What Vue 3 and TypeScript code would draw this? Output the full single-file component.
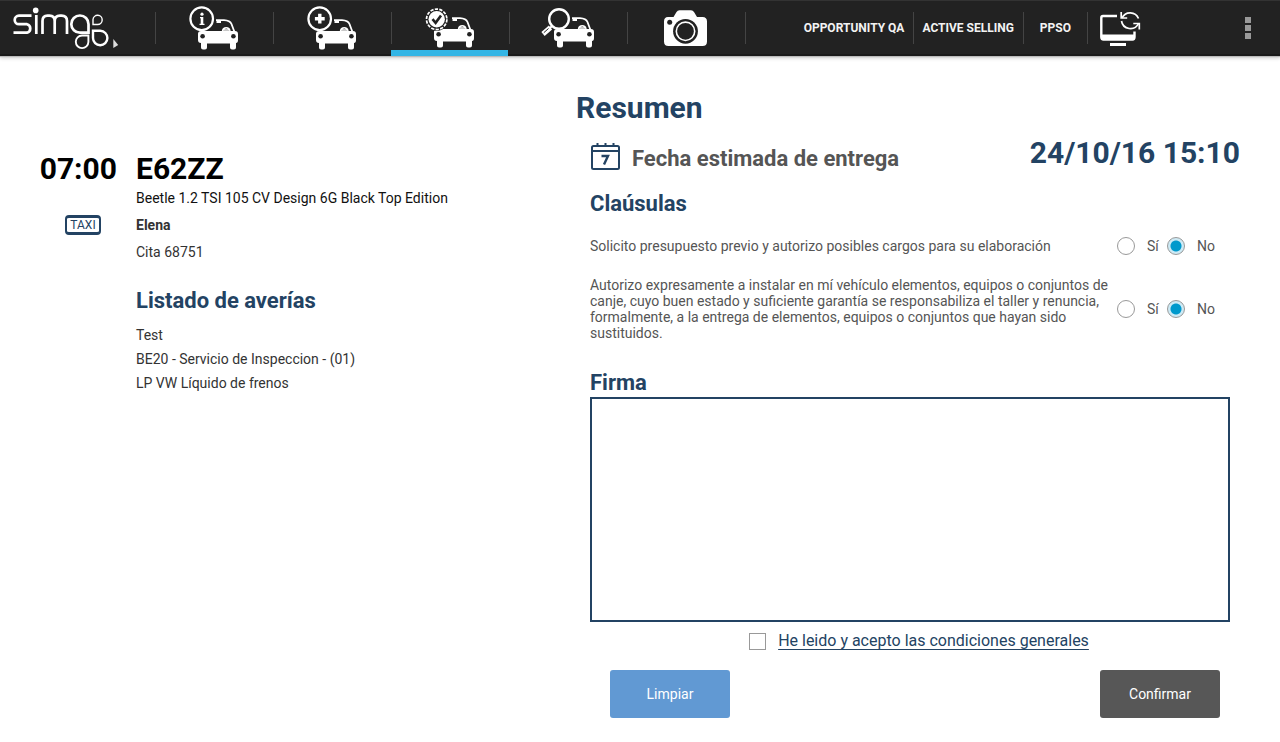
<script setup lang="ts">
import { onMounted, reactive, ref } from 'vue'

interface Tab { id: string; label: string }
interface Clause { id: string; text: string; answer: 'si' | 'no' }

const tabs: Tab[] = [
  { id: 'info', label: 'Información' },
  { id: 'add', label: 'Añadir' },
  { id: 'check', label: 'Resumen' },
  { id: 'search', label: 'Inspección' },
  { id: 'camera', label: 'Fotos' },
]
const active = ref('check')
const links = ['OPPORTUNITY QA', 'ACTIVE SELLING', 'PPSO']
const faults = ['Test', 'BE20 - Servicio de Inspeccion - (01)', 'LP VW Líquido de frenos']
const clauses = reactive<Clause[]>([
  { id: 'presupuesto', text: 'Solicito presupuesto previo y autorizo posibles cargos para su elaboración', answer: 'no' },
  {
    id: 'canje',
    text: 'Autorizo expresamente a instalar en mí vehículo elementos, equipos o conjuntos de canje, cuyo buen estado y suficiente garantía se responsabiliza el taller y renuncia, formalmente, a la entrega de elementos, equipos o conjuntos que hayan sido sustituidos.',
    answer: 'no',
  },
])
const accepted = ref(false)

const pad = ref<HTMLCanvasElement | null>(null)
let drawing = false

onMounted(() => {
  const c = pad.value
  if (c) {
    c.width = c.clientWidth
    c.height = c.clientHeight
  }
})

function start(e: PointerEvent) {
  const ctx = pad.value?.getContext('2d')
  if (!ctx) return
  drawing = true
  ctx.lineWidth = 2
  ctx.strokeStyle = '#234363'
  ctx.beginPath()
  ctx.moveTo(e.offsetX, e.offsetY)
}
function move(e: PointerEvent) {
  const ctx = pad.value?.getContext('2d')
  if (!drawing || !ctx) return
  ctx.lineTo(e.offsetX, e.offsetY)
  ctx.stroke()
}
function stop() {
  drawing = false
}
function clearPad() {
  const c = pad.value
  c?.getContext('2d')?.clearRect(0, 0, c.width, c.height)
}
</script>

<template>
  <div class="page">
    <svg class="defs" aria-hidden="true">
      <defs>
        <g id="car">
          <path d="M3 31H37Q40 31 40 34V40Q40 43 38 43V47.5Q38 49.5 36 49.5H34Q32 49.5 32 47.5V43.5H9V47.5Q9 49.5 7 49.5H5Q3 49.5 3 47.5V43Q0 43 0 40V34Q0 31 3 31Z" fill="#fff" />
          <circle cx="4.6" cy="36.3" r="2.3" fill="#222" />
          <circle cx="35.4" cy="36.3" r="2.3" fill="#222" />
          <path d="M18 20.2H26Q32 20.6 33.5 24L36.3 31.5" fill="none" stroke="#fff" stroke-width="1.8" />
          <path d="M18.5 20H23V23H18.5Z" fill="#fff" />
          <path d="M24.5 31A3.8 3.8 0 0 1 32 31M25 30H31.5" fill="none" stroke="#fff" stroke-width="1.4" />
        </g>
      </defs>
    </svg>

    <header class="bar">
      <a class="logo" href="#" aria-label="simo">
        <svg viewBox="0 0 155 56" width="155" height="56" fill="none" stroke="#fff" stroke-width="2.7">
          <path d="M31.5 15.6H19A4.3 4.3 0 0 0 19 24.2H27A4.4 4.4 0 0 1 27 32.7H13.5" />
          <path d="M36.3 15V34" />
          <circle cx="35.7" cy="10.4" r="2.8" fill="#fff" stroke="none" />
          <path d="M42.5 34V21Q42.5 15.6 47.5 15.6H49.5Q54.7 15.6 54.7 21V34M54.7 21Q54.7 15.6 60 15.6H61.5Q67 15.6 67 21V34" />
          <path d="M88.5 32.7H80A8.6 8.6 0 1 1 88.5 24.2Z" />
          <path d="M93 24.5V19.5A4.6 4.6 0 1 1 97.6 24.5Z" stroke-width="1.4" />
          <path d="M93 30.8H100.3A7.2 7.2 0 1 1 93 38Z" stroke-width="2.4" />
          <path d="M88.4 35.5V42A6.3 6.3 0 1 1 82 35.5Z" stroke-width="1.9" />
          <path d="M113.3 39L118.2 45L113.3 48Z" fill="#ddd" stroke="none" />
        </svg>
      </a>
      <nav class="tabs" aria-label="Secciones">
        <button
          v-for="t in tabs" :key="t.id" type="button" class="tab"
          :class="{ active: active === t.id }" :aria-label="t.label" @click="active = t.id"
        >
          <svg viewBox="0 0 118 56" width="118" height="56" fill="none">
            <template v-if="t.id === 'info'">
              <use href="#car" x="43" />
              <circle cx="46.7" cy="18.7" r="11.3" fill="#222" stroke="#fff" stroke-width="2.2" />
              <path d="M45 17.6H47M44.5 24.3H49.5" stroke="#fff" stroke-width="1.3" />
              <path d="M47 17V24.9" stroke="#fff" stroke-width="2.6" />
              <circle cx="47" cy="14.2" r="1.6" fill="#fff" />
            </template>
            <template v-else-if="t.id === 'add'">
              <use href="#car" x="43" />
              <circle cx="46.7" cy="18.7" r="11.3" fill="#222" stroke="#fff" stroke-width="2.2" />
              <path d="M46.8 13.8V23.6M41.9 18.7H51.7" stroke="#fff" stroke-width="3.4" />
            </template>
            <template v-else-if="t.id === 'check'">
              <use href="#car" x="43" y="-2" />
              <circle cx="45.7" cy="19.3" r="11.5" fill="#222" />
              <circle cx="45.7" cy="19.3" r="10.2" stroke="#fff" stroke-width="1.7" stroke-dasharray="3.3 1.28" />
              <circle cx="45.7" cy="19.3" r="8.2" fill="#fff" />
              <path d="M41.5 19.2L44.6 22.8L50 15.4" stroke="#222" stroke-width="2.6" />
            </template>
            <template v-else-if="t.id === 'search'">
              <use href="#car" x="45" y="-2" />
              <circle cx="50" cy="19" r="9.8" fill="#222" stroke="#fff" stroke-width="2.4" />
              <path d="M43.5 25.5L40.5 28.5" stroke="#fff" stroke-width="2" />
              <path d="M41.5 27.5L34 34" stroke="#fff" stroke-width="5" />
              <path d="M39.5 28.5L34.8 32.7" stroke="#222" stroke-width="1" />
            </template>
            <template v-else>
              <path d="M41 17H46.5L49.5 12Q50.5 10.2 52.5 10.2H64Q66 10.2 67 12L70 17H75.5Q80 17 80 21.5V41.5Q80 46 75.5 46H41.5Q37 46 37 41.5V21.5Q37 17 41 17Z" fill="#fff" />
              <circle cx="58.5" cy="31.3" r="12.4" fill="#222" />
              <circle cx="58.5" cy="31.3" r="9.2" stroke="#fff" stroke-width="1.6" />
              <circle cx="42.7" cy="22.2" r="2.5" fill="#222" />
            </template>
          </svg>
        </button>
      </nav>
      <nav class="links" aria-label="Accesos">
        <a v-for="l in links" :key="l" href="#">{{ l }}</a>
        <button type="button" class="sync" aria-label="Sincronizar">
          <svg viewBox="0 0 42 38" width="42" height="38" fill="none">
            <path d="M18 7H4Q2.3 7 2.3 9V28Q2.3 30.5 4.5 30.5H33.5Q35.5 30.5 35.5 28V22.5" stroke="#fff" stroke-width="2.4" />
            <path d="M2.5 25.5H35.5V29Q35.5 31 33.5 31H4.5Q2.5 31 2.5 29Z" fill="#fff" />
            <path d="M11 34H27V37H11Z" fill="#fff" />
            <path d="M23 9A9 9 0 0 1 39.5 9.5M39.5 14.5A9 9 0 0 1 22.5 12" stroke="#fff" stroke-width="1.7" />
            <path d="M22.2 3V9H28.2M40.3 20.5V14.5H34.3" stroke="#fff" stroke-width="1.7" />
          </svg>
        </button>
      </nav>
      <button type="button" class="more" aria-label="Más opciones"><i /><i /><i /></button>
    </header>

    <main class="content">
      <section class="visit">
        <div class="side">
          <time class="big">07:00</time>
          <span class="taxi">TAXI</span>
        </div>
        <div class="info">
          <h1 class="big">E62ZZ</h1>
          <p class="model">Beetle 1.2 TSI 105 CV Design 6G Black Top Edition</p>
          <p class="name">Elena</p>
          <p class="cita">Cita 68751</p>
          <h2>Listado de averías</h2>
          <ul>
            <li v-for="f in faults" :key="f">{{ f }}</li>
          </ul>
        </div>
      </section>

      <form class="summary" @submit.prevent>
        <h1 class="title">Resumen</h1>
        <div class="delivery">
          <svg viewBox="0 0 30 30" width="30" height="30" fill="none" stroke="#234363">
            <rect x="2" y="5" width="27" height="23" rx="1.5" stroke-width="2" />
            <path d="M2 10H29" stroke-width="2" />
            <path d="M7.5 2V6M15.5 2V6M23.5 2V6" stroke-width="2" />
            <path d="M11.5 15H18L14 23.5" stroke-width="2.4" />
          </svg>
          <span class="label">Fecha estimada de entrega</span>
          <time class="date">24/10/16 15:10</time>
        </div>
        <div class="inner">
          <h2>Claúsulas</h2>
          <div v-for="c in clauses" :key="c.id" class="clause" role="radiogroup" :aria-labelledby="c.id">
            <p :id="c.id">{{ c.text }}</p>
            <label class="yes"><input v-model="c.answer" type="radio" :name="'r-' + c.id" value="si">Sí</label>
            <label class="no"><input v-model="c.answer" type="radio" :name="'r-' + c.id" value="no">No</label>
          </div>
          <h2 class="sign">Firma</h2>
          <canvas
            ref="pad" class="pad" aria-label="Firma"
            @pointerdown="start" @pointermove="move" @pointerup="stop" @pointerleave="stop"
          />
          <div class="accept">
            <input id="accept" v-model="accepted" type="checkbox" aria-labelledby="terms">
            <a id="terms" href="#">He leido y acepto las condiciones generales</a>
          </div>
          <div class="actions">
            <button type="button" class="clear" @click="clearPad">Limpiar</button>
            <button type="submit" class="confirm">Confirmar</button>
          </div>
        </div>
      </form>
    </main>
  </div>
</template>

<style>
body {
  background: #fff;
}
</style>

<style scoped>
.page {
  font-family: Roboto, "Liberation Sans", sans-serif;
  font-size: 14px;
  color: #333;
}
h1, h2, p, ul {
  margin: 0;
  padding: 0;
}
button {
  border: 0;
  padding: 0;
  background: none;
  font: inherit;
  cursor: pointer;
}
svg {
  display: block;
}
.defs {
  position: absolute;
  width: 0;
  height: 0;
}
.bar {
  display: flex;
  height: 56px;
  background: #222;
  box-shadow: inset 0 1px #333, inset 0 -2px #1a1a1a, 0 1px 1px #bbb, 0 2px 4px rgba(0, 0, 0, 0.2);
}
.tabs {
  display: flex;
  border-right: 1px solid transparent;
  background: linear-gradient(#444, #444) no-repeat right 12px / 1px 32px;
  background-origin: border-box;
}
.tab {
  width: 118px;
  height: 56px;
  background: linear-gradient(#444, #444) no-repeat left 12px / 1px 32px;
}
.tab.active {
  background:
    linear-gradient(#33b5e5, #33b5e5) no-repeat left bottom / 117px 6px,
    linear-gradient(#444, #444) no-repeat left 12px / 1px 32px;
}
.links {
  display: flex;
  align-items: center;
  margin-left: auto;
}
.links a {
  padding: 0 9px 0 8px;
  line-height: 32px;
  border-right: 1px solid #444;
  color: #f3f3f3;
  font-size: 12px;
  font-weight: 700;
  text-decoration: none;
}
.links a:nth-child(3) {
  padding: 0 16px;
}
.sync {
  margin-left: 11px;
}
.more {
  display: flex;
  flex-direction: column;
  justify-content: center;
  align-items: center;
  gap: 2px;
  width: 64px;
  margin-left: 75px;
}
.more i {
  width: 6px;
  height: 6px;
  background: #999;
}
.content {
  display: grid;
  grid-template-columns: 45% 1fr;
  padding: 32px 0 24px;
}
.visit {
  display: flex;
  gap: 19px;
  padding: 61px 20px 0 40px;
}
.side {
  display: flex;
  flex-direction: column;
  align-items: flex-end;
  width: 77px;
}
.big {
  font-size: 30px;
  line-height: 40px;
  font-weight: 700;
  color: #000;
}
.taxi {
  box-sizing: border-box;
  width: 36px;
  height: 20px;
  margin: 26px 16px 0 0;
  border: 2px solid #234363;
  border-top-width: 3px;
  border-bottom-width: 3px;
  border-radius: 4px;
  color: #234363;
  font-size: 12px;
  line-height: 15px;
  text-align: center;
}
h2 {
  color: #234363;
  font-size: 22px;
  line-height: 30px;
  font-weight: 700;
}
.model {
  color: #111;
  line-height: 18px;
}
.name {
  margin-top: 8px;
  font-weight: 700;
  line-height: 20px;
}
.cita {
  margin-top: 7px;
  line-height: 20px;
}
.info h2 {
  margin-top: 24px;
}
ul {
  margin-top: 7px;
  list-style: none;
  line-height: 24px;
}
.summary {
  padding-right: 40px;
}
.title {
  font-size: 30px;
  line-height: 40px;
  font-weight: 700;
  color: #234363;
}
.delivery {
  display: flex;
  align-items: center;
  height: 56px;
  padding-left: 14px;
}
.label {
  margin: 6px 0 0 12px;
  color: #555;
  font-size: 22px;
  font-weight: 700;
  line-height: 30px;
}
.date {
  margin: 0 0 6px auto;
  color: #234363;
  font-size: 30px;
  font-weight: 700;
  line-height: 40px;
}
.inner {
  padding: 5px 10px 0 14px;
}
.clause {
  display: flex;
  align-items: center;
  margin-top: 18px;
  color: #555;
}
.clause + .clause {
  margin-top: 22px;
}
.clause p {
  flex: 1;
  padding-right: 4px;
  line-height: 16px;
}
.clause label {
  display: flex;
  align-items: center;
  gap: 12px;
}
.yes {
  width: 50px;
}
.no {
  width: 63px;
}
input {
  appearance: none;
  box-sizing: border-box;
  width: 18px;
  height: 18px;
  margin: 0;
  border: 1px solid #999;
  background: #fff;
}
input[type="radio"] {
  border-radius: 50%;
}
input[type="radio"]:checked {
  background: radial-gradient(circle, #0099cc 5px, #cdeaf5 6px);
}
input[type="checkbox"] {
  width: 17px;
  height: 17px;
}
input[type="checkbox"]:checked {
  background: #0099cc;
}
.sign {
  margin-top: 27px;
}
.pad {
  display: block;
  box-sizing: border-box;
  width: 100%;
  height: 225px;
  margin-top: -1px;
  border: 2px solid #234363;
  touch-action: none;
}
.accept {
  display: flex;
  align-items: center;
  justify-content: center;
  gap: 12px;
  height: 38px;
  padding-left: 18px;
}
.accept a {
  color: #234363;
  font-size: 16px;
  line-height: 20px;
  text-underline-offset: 3px;
}
.actions {
  display: flex;
  justify-content: space-between;
  margin-top: 10px;
  padding: 0 10px 0 20px;
}
.actions button {
  width: 120px;
  height: 48px;
  border-radius: 3px;
  color: #fff;
}
.clear {
  background: #6199d3;
}
.confirm {
  background: #575757;
}
</style>
